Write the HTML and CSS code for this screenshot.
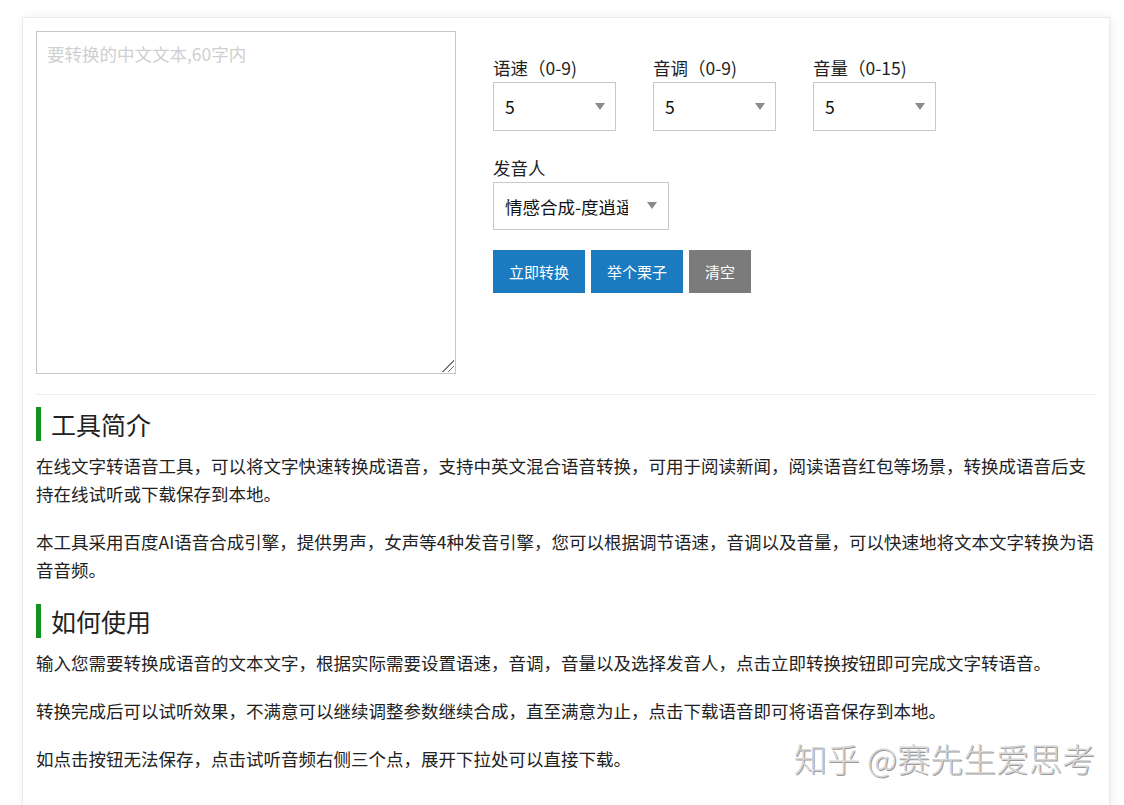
FILE: index.html
```html
<!DOCTYPE html>
<html lang="zh-CN">
<head>
    <meta charset="UTF-8">
    <meta name="viewport" content="width=device-width, initial-scale=1.0">
    <title>在线文字转语音</title>
    <link rel="stylesheet" href="styles.css">
</head>
<body>
    <div class="card">
        <div class="tool">
            <div class="text-wrap">
                <textarea class="text-input" placeholder="要转换的中文文本,60字内"></textarea>
            </div>

            <div class="controls">
                <div class="row">
                    <div class="field">
                        <label class="label">语速（0-9)</label>
                        <div class="select-wrap">
                            <select class="select-field">
                                <option>0</option><option>1</option><option>2</option><option>3</option><option>4</option>
                                <option selected>5</option>
                                <option>6</option><option>7</option><option>8</option><option>9</option>
                            </select>
                        </div>
                    </div>
                    <div class="field">
                        <label class="label">音调（0-9)</label>
                        <div class="select-wrap">
                            <select class="select-field">
                                <option>0</option><option>1</option><option>2</option><option>3</option><option>4</option>
                                <option selected>5</option>
                                <option>6</option><option>7</option><option>8</option><option>9</option>
                            </select>
                        </div>
                    </div>
                    <div class="field">
                        <label class="label">音量（0-15)</label>
                        <div class="select-wrap">
                            <select class="select-field">
                                <option>0</option><option>1</option><option>2</option><option>3</option><option>4</option>
                                <option selected>5</option>
                                <option>6</option><option>7</option><option>8</option><option>9</option>
                                <option>10</option><option>11</option><option>12</option><option>13</option><option>14</option><option>15</option>
                            </select>
                        </div>
                    </div>
                </div>

                <div class="field">
                    <label class="label">发音人</label>
                    <div class="select-wrap wide">
                        <select class="select-field">
                            <option selected>情感合成-度逍遥</option>
                            <option>情感合成-度丫丫</option>
                            <option>普通女声</option>
                            <option>普通男声</option>
                        </select>
                    </div>
                </div>

                <div class="buttons">
                    <button type="button" class="button">立即转换</button>
                    <button type="button" class="button">举个栗子</button>
                    <button type="button" class="button gray">清空</button>
                </div>
            </div>
        </div>

        <div class="divider"></div>

        <h2 class="title">工具简介</h2>
        <p class="text">在线文字转语音工具，可以将文字快速转换成语音，支持中英文混合语音转换，可用于阅读新闻，阅读语音红包等场景，转换成语音后支持在线试听或下载保存到本地。</p>
        <p class="text">本工具采用百度AI语音合成引擎，提供男声，女声等4种发音引擎，您可以根据调节语速，音调以及音量，可以快速地将文本文字转换为语音音频。</p>

        <h2 class="title">如何使用</h2>
        <p class="text">输入您需要转换成语音的文本文字，根据实际需要设置语速，音调，音量以及选择发音人，点击立即转换按钮即可完成文字转语音。</p>
        <p class="text">转换完成后可以试听效果，不满意可以继续调整参数继续合成，直至满意为止，点击下载语音即可将语音保存到本地。</p>
        <p class="text">如点击按钮无法保存，点击试听音频右侧三个点，展开下拉处可以直接下载。</p>
    </div>

    <div class="watermark">知乎 @赛先生爱思考</div>
</body>
</html>
```

FILE: styles.css
```css
body {
    font-family: "Noto Sans CJK SC", "Noto Sans", sans-serif;
    font-size: 17.5px;
    color: #222;
    background: #fff;
    margin: 0;
    padding: 17px 0 0 22px;
    overflow: hidden;
}
.card {
    width: 1060px;
    padding: 13px;
    border: 1px solid #ebebeb;
    box-shadow: 2px 0 10px rgba(0, 0, 0, 0.07);
    background: #fff;
    min-height: 900px;
}
.tool {
    display: flex;
}
.text-wrap {
    position: relative;
    width: 420px;
    height: 343px;
}
/* 크기 조절 손잡이 */
.text-wrap::after {
    content: "";
    position: absolute;
    right: 2px;
    bottom: 2px;
    width: 16px;
    height: 16px;
    background: repeating-linear-gradient(135deg, transparent 0 2px, #777 2px 3px, transparent 3px 4px);
    clip-path: polygon(100% 0, 100% 100%, 0 100%);
    pointer-events: none;
}
.text-input {
    width: 100%;
    height: 100%;
    box-sizing: border-box;
    border: 1px solid #c6c6c6;
    padding: 10px;
    font-family: inherit;
    font-size: 17.5px;
    line-height: 1.4;
    margin: 0;
    resize: none;
}
.text-input::placeholder {
    color: #cfcfcf;
}
.controls {
    margin-left: 37px;
    padding-top: 23px;
}
.row {
    display: flex;
    gap: 37px;
}
.field {
    margin-bottom: 23px;
}
.label {
    display: block;
    line-height: 28px;
}
.select-wrap {
    position: relative;
    width: 123px;
}
.select-wrap.wide {
    width: 176px;
}
.select-wrap::after {
    content: "";
    position: absolute;
    right: 11px;
    top: 21px;
    border-left: 5px solid transparent;
    border-right: 5px solid transparent;
    border-top: 7px solid #8a8a8a;
    pointer-events: none;
}
.select-wrap.wide::after {
    right: 12px;
    top: 20px;
}
.select-field {
    appearance: none;
    -webkit-appearance: none;
    width: 100%;
    height: 49px;
    box-sizing: border-box;
    border: 1px solid #c8c8c8;
    border-radius: 0;
    background: #fff;
    padding: 0 30px 0 11px;
    font-family: inherit;
    font-size: 17.5px;
    color: #111;
    margin: 0;
}
.wide .select-field {
    height: 48px;
    padding-right: 40px;
}
.buttons {
    display: flex;
    gap: 6px;
    margin-top: -3px;
}
.button {
    height: 43px;
    padding: 0 16px;
    border: none;
    border-radius: 0;
    background: #1b7bc1;
    color: #fff;
    font-family: inherit;
    font-size: 15px;
    cursor: pointer;
}
.button.gray {
    background: #7b7b7b;
}
.divider {
    height: 1px;
    background: #ececec;
    margin: 20px 0 12px;
}
.title {
    margin: 0 0 11px;
    border-left: 5px solid #129020;
    padding-left: 10px;
    font-size: 25px;
    font-weight: normal;
    line-height: 34px;
    color: #222;
}
.text {
    margin: 0 0 20px;
    line-height: 28px;
}
.watermark {
    position: absolute;
    right: 29px;
    top: 734px;
    font-size: 33px;
    font-weight: 300;
    color: #d6d6d6;
    text-shadow: 1px 1px 0 #9a9a9a, -1px -1px 0 #fff;
}
```
